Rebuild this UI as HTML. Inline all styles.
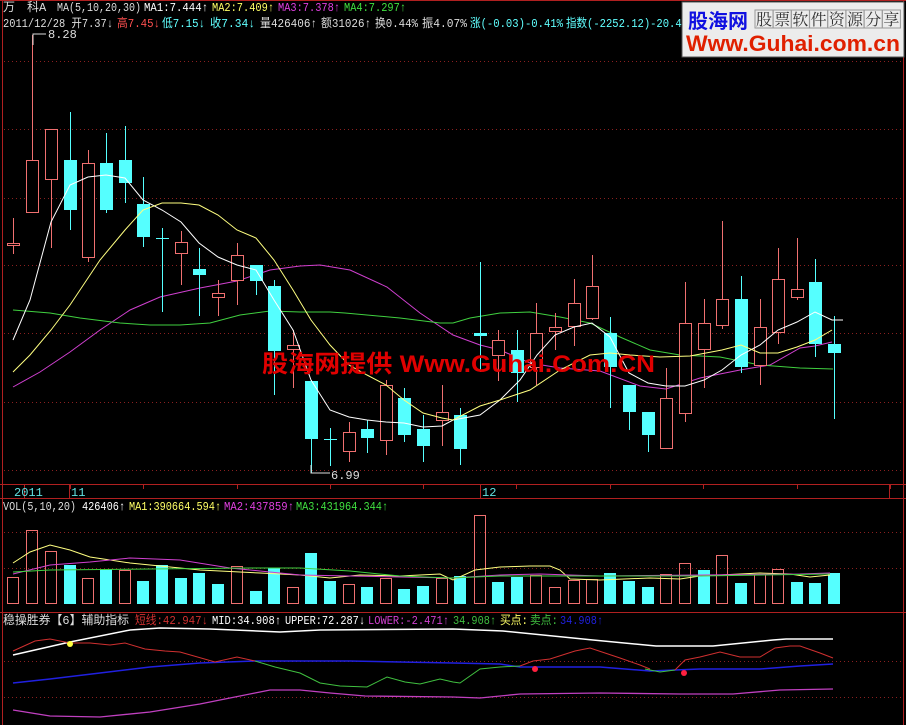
<!DOCTYPE html>
<html><head><meta charset="utf-8"><style>
html,body{margin:0;padding:0;background:#000;width:906px;height:725px;overflow:hidden}
svg{display:block}
text{font-family:"Liberation Mono","Noto Sans CJK SC",monospace;font-size:12px}
</style></head><body>
<svg id="s" width="906" height="725" xmlns="http://www.w3.org/2000/svg">
<rect width="906" height="725" fill="#000"/>
<g id="grid"></g>
<g id="g"></g>
<!-- borders -->
<g stroke="#b02020" stroke-width="1" fill="none">
<line x1="2.5" y1="0" x2="2.5" y2="725"/>
<line x1="903.5" y1="0" x2="903.5" y2="725"/>
<line x1="0" y1="0.5" x2="906" y2="0.5"/>
<line x1="0" y1="484.5" x2="906" y2="484.5"/>
<line x1="0" y1="498.5" x2="906" y2="498.5"/>
<line x1="0" y1="612.5" x2="906" y2="612.5"/>
</g>
<g id="ticks" stroke="#b02020"></g>
<!-- header -->
<text x="3" y="11" fill="#ddd">万</text>
<text x="27" y="11" fill="#ddd">科A</text>
<text x="57" y="11" fill="#ddd" textLength="84" lengthAdjust="spacingAndGlyphs">MA(5,10,20,30)</text>
<text x="144" y="11" fill="#fff" textLength="64" lengthAdjust="spacingAndGlyphs">MA1:7.444↑</text>
<text x="212" y="11" fill="#ffff66" textLength="62" lengthAdjust="spacingAndGlyphs">MA2:7.409↑</text>
<text x="278" y="11" fill="#e040e0" textLength="62" lengthAdjust="spacingAndGlyphs">MA3:7.378↑</text>
<text x="344" y="11" fill="#40e040" textLength="62" lengthAdjust="spacingAndGlyphs">MA4:7.297↑</text>
<text x="3" y="27" fill="#ddd" textLength="110" lengthAdjust="spacingAndGlyphs">2011/12/28 开7.37↓</text>
<text x="117" y="27" fill="#ff5050" textLength="43" lengthAdjust="spacingAndGlyphs">高7.45↓</text>
<text x="162" y="27" fill="#60ffff" textLength="43" lengthAdjust="spacingAndGlyphs">低7.15↓</text>
<text x="210" y="27" fill="#60ffff" textLength="45" lengthAdjust="spacingAndGlyphs">收7.34↓</text>
<text x="260" y="27" fill="#ddd" textLength="57" lengthAdjust="spacingAndGlyphs">量426406↑</text>
<text x="321" y="27" fill="#ddd" textLength="50" lengthAdjust="spacingAndGlyphs">额31026↑</text>
<text x="375" y="27" fill="#ddd" textLength="43" lengthAdjust="spacingAndGlyphs">换0.44%</text>
<text x="422" y="27" fill="#ddd" textLength="45" lengthAdjust="spacingAndGlyphs">振4.07%</text>
<text x="470" y="27" fill="#60ffff" textLength="93" lengthAdjust="spacingAndGlyphs">涨(-0.03)-0.41%</text>
<text x="566" y="27" fill="#60ffff" textLength="122" lengthAdjust="spacingAndGlyphs">指数(-2252.12)-20.49</text>
<!-- labels -->
<polyline points="33,45 33,34 46,34" stroke="#ddd" fill="none"/>
<text x="48" y="38" fill="#ddd" font-size="11">8.28</text>
<polyline points="311,465 311,473 330,473" stroke="#ddd" fill="none"/>
<text x="331" y="479" fill="#ddd" font-size="11">6.99</text>
<text x="14" y="496" fill="#60e0e0" font-size="11">2011</text>
<text x="71" y="496" fill="#60e0e0" font-size="11">11</text>
<text x="482" y="496" fill="#60e0e0" font-size="11">12</text>
<text x="3" y="510" fill="#ddd" textLength="73" lengthAdjust="spacingAndGlyphs">VOL(5,10,20)</text>
<text x="82" y="510" fill="#fff" textLength="43" lengthAdjust="spacingAndGlyphs">426406↑</text>
<text x="129" y="510" fill="#ffff66" textLength="92" lengthAdjust="spacingAndGlyphs">MA1:390664.594↑</text>
<text x="224" y="510" fill="#e040e0" textLength="70" lengthAdjust="spacingAndGlyphs">MA2:437859↑</text>
<text x="296" y="510" fill="#40e040" textLength="92" lengthAdjust="spacingAndGlyphs">MA3:431964.344↑</text>
<text x="3" y="624" fill="#ddd" textLength="126" lengthAdjust="spacingAndGlyphs">稳操胜券【6】辅助指标</text>
<text x="135" y="624" fill="#d03030" textLength="73" lengthAdjust="spacingAndGlyphs">短线:42.947↓</text>
<text x="212" y="624" fill="#fff" textLength="69" lengthAdjust="spacingAndGlyphs">MID:34.908↑</text>
<text x="285" y="624" fill="#fff" textLength="80" lengthAdjust="spacingAndGlyphs">UPPER:72.287↓</text>
<text x="368" y="624" fill="#d040d0" textLength="81" lengthAdjust="spacingAndGlyphs">LOWER:-2.471↑</text>
<text x="453" y="624" fill="#40c040" textLength="43" lengthAdjust="spacingAndGlyphs">34.908↑</text>
<text x="500" y="624" fill="#ffff66" textLength="28" lengthAdjust="spacingAndGlyphs">买点:</text>
<text x="530" y="624" fill="#40c040" textLength="28" lengthAdjust="spacingAndGlyphs">卖点:</text>
<text x="560" y="624" fill="#2020e0" textLength="43" lengthAdjust="spacingAndGlyphs">34.908↑</text>
<!-- watermark -->
<text x="262" y="372" fill="#e00000" font-family="Liberation Sans,'Noto Sans CJK SC',sans-serif" font-weight="bold" font-size="24" textLength="393" lengthAdjust="spacingAndGlyphs" style="font-family:'Liberation Sans','Noto Sans CJK SC',sans-serif;font-size:24px">股海网提供 Www.Guhai.Com.CN</text>
<!-- logo -->
<rect x="682" y="2" width="222" height="55" fill="#ececec" stroke="#555"/>
<text x="688" y="28" fill="#1010e0" font-weight="bold" textLength="60" lengthAdjust="spacingAndGlyphs" style="font-family:'Noto Sans CJK SC',sans-serif;font-size:20px">股海网</text>
<g id="boxes"></g>
<text x="686" y="51" fill="#e02000" font-weight="bold" textLength="214" lengthAdjust="spacingAndGlyphs" style="font-family:'Liberation Sans',sans-serif;font-size:22px">Www.Guhai.com.cn</text>
</svg>
<script>
var NS="http://www.w3.org/2000/svg",G=document.getElementById('g');
function el(p,t,a){var e=document.createElementNS(NS,t);for(var k in a)e.setAttribute(k,a[k]);p.appendChild(e);return e;}
var grid=document.getElementById('grid');
[61,129,198,265,333,402,470,532,568,661,697].forEach(function(y){el(grid,'line',{x1:4,x2:902,y1:y+.5,y2:y+.5,stroke:'#8a2020','stroke-dasharray':'1 3'});});
var tk=document.getElementById('ticks');
[70,143,237,330,423,480,516,610,703,797,890].forEach(function(x){el(tk,'line',{x1:x+.5,x2:x+.5,y1:484,y2:489});});
el(tk,'line',{x1:24.5,x2:24.5,y1:484,y2:499});el(tk,'line',{x1:69.5,x2:69.5,y1:484,y2:499});el(tk,'line',{x1:480.5,x2:480.5,y1:484,y2:499});el(tk,'line',{x1:889.5,x2:889.5,y1:484,y2:499});
var R='#f07070',C='#55ffff';
// [x, bodyTop, bodyBot, wickTop, wickBot, red?]
var c=[[13,243,246,218,254,1],[32,160,213,35,213,1],[51,129,180,129,248,1],[70,160,210,112,230,0],[88,163,258,150,262,1],[106,163,210,133,213,0],[125,160,183,126,203,0],[143,204,237,177,247,0],[162,238,239,228,312,0],[181,242,254,231,285,1],[199,269,275,248,316,0],[218,293,298,280,316,1],[237,255,281,243,305,1],[256,265,281,265,295,0],[274,286,351,280,395,0],[293,345,350,330,388,1],[311,381,439,380,473,0],[330,439,440,428,466,0],[349,432,452,422,462,1],[367,429,438,420,453,0],[386,385,441,380,455,1],[404,398,435,388,442,0],[423,429,446,415,462,0],[442,412,421,385,446,1],[460,415,449,408,465,0],[480,333,336,262,372,0],[498,340,356,330,381,1],[517,350,373,330,402,0],[536,333,368,303,385,1],[555,327,332,313,350,1],[574,303,327,279,346,1],[592,286,319,255,320,1],[610,333,367,317,408,0],[629,385,412,385,430,0],[648,412,435,412,452,0],[666,398,449,368,449,1],[685,323,414,282,422,1],[704,323,350,299,388,1],[722,299,326,221,329,1],[741,299,367,276,373,0],[760,327,366,299,385,1],[778,279,333,248,344,1],[797,289,298,238,300,1],[815,282,344,259,357,0],[834,344,353,316,419,0]];
var vt=[577,530,551,565,578,569,570,581,565,578,573,584,566,591,568,587,553,581,584,587,578,589,586,578,576,515,582,577,575,587,580,579,573,581,587,574,563,570,555,583,574,569,582,583,573];
var vr=[1,1,1,0,1,0,1,0,0,0,0,0,1,0,0,1,0,0,1,0,1,0,0,1,0,1,0,0,1,1,1,1,0,0,0,1,1,0,1,0,1,1,0,0,0];
function pl(pts,col,w){el(G,'polyline',{points:pts,fill:'none',stroke:col,'stroke-width':w||1});}
// volume bars
c.forEach(function(d,i){var x=d[0],t=vt[i];
 if(vr[i])el(G,'rect',{x:x-5.5,y:t+.5,width:11,height:604-t-1,fill:'none',stroke:R});
 else el(G,'rect',{x:x-6,y:t,width:12,height:604-t,fill:C});});
// vol MAs
pl("13,563 30,552 50,545 70,550 90,557 110,560 130,563 150,565 200,570 260,573 300,575 330,578 360,575 400,576 440,574 453,580 475,570 500,567 530,566 550,566 560,570 570,579 600,580 650,578 680,579 700,576 720,575 740,574 760,573 790,574 810,577 830,575",'#ffff80');
pl("13,574 50,565 90,562 130,558 180,560 230,568 270,572 300,575 453,578 500,575 540,574 600,576 700,575 800,574 830,573",'#d040d0');
pl("13,572 50,570 150,569 250,568 300,568 350,571 400,576 450,578 500,576 700,576 830,574",'#40d040');
// MA lines main
pl("13,387 40,372 70,352 100,330 130,310 160,297 200,288 237,281 270,270 300,266 320,265 350,270 387,287 420,313 453,335 480,345 500,350 530,363 560,368 600,371 640,386 666,389 700,378 740,370 770,365 800,348 815,346 832,342",'#d040d0');
pl("13,310 50,313 80,318 120,323 150,325 180,325 210,323 240,315 270,311 300,312 330,312 345,313 400,318 440,323 453,323 470,318 500,313 530,312 560,317 590,323 620,337 650,350 680,355 720,357 760,365 800,368 833,369",'#40d040');
// candles
c.forEach(function(d){var x=d[0],col=d[5]?R:C;
 el(G,'line',{x1:x+.5,x2:x+.5,y1:d[3],y2:d[4],stroke:col});
 var h=d[2]-d[1];
 if(d[5]){el(G,'rect',{x:x-5.5,y:d[1]+.5,width:12,height:Math.max(h-1,1),fill:'#000',stroke:col});}
 else if(h<2){el(G,'line',{x1:x-6,x2:x+7,y1:d[1]+.5,y2:d[1]+.5,stroke:col});}
 else el(G,'rect',{x:x-6,y:d[1],width:13,height:h,fill:col});});
pl("13,340 30,300 51,222 70,185 88,177 106,175 125,178 143,200 162,210 181,222 199,243 218,257 237,265 256,270 274,300 293,330 311,380 330,410 349,417 367,420 386,422 404,423 423,427 442,426 453,420 480,415 500,400 520,380 537,355 555,335 574,327 592,323 610,337 629,373 648,383 666,386 685,386 704,380 722,370 741,355 760,345 778,330 797,322 815,312 832,320 843,320",'#ffffff');
pl("13,372 30,355 51,330 70,305 100,260 125,230 143,210 162,203 181,203 199,205 218,215 237,230 256,238 274,260 293,290 311,320 330,345 349,365 367,375 386,385 404,400 423,413 442,418 453,420 480,406 500,400 530,390 560,370 590,355 610,353 630,355 660,357 690,356 722,350 741,345 760,353 778,353 797,347 815,340 832,330",'#ffff80');
// indicator
pl("13,710 50,716 100,717 150,712 200,704 255,693 270,690 300,690 330,693 365,696 453,697 480,698 520,694 600,693 680,694 733,694 780,690 833,689",'#c040c0',1.3);
pl("13,683 50,679 100,673 150,667 200,663 255,661 300,661 350,661 400,662 453,663 500,664 520,667 600,667 650,671 700,669 760,669 800,666 833,664",'#2020e0',1.5);
pl("13,655 70,642 130,630 160,628 210,629 280,632 300,631 320,630 453,629 503,631 593,640 656,646 713,646 773,640 786,639 833,639",'#ffffff',1.5);
pl("13,651 35,641 50,639 70,643 90,643 110,645 125,643 145,649 165,651 180,652 215,662 237,657 255,661",'#d03030');
pl("255,661 275,667 300,673 320,683 340,686 367,687 387,677 405,682 420,684 440,679 453,682 460,683 480,669 500,667 520,666",'#40c040');
pl("520,666 533,661 550,659 575,651 590,648 605,653 620,658 640,665 650,669",'#d03030');
pl("645,669 660,672 675,670",'#40c040');
pl("675,670 685,660 700,657 720,652 740,657 760,657 775,648 790,646 800,646 820,653 833,658",'#d03030');
el(G,'circle',{cx:70,cy:644,r:3,fill:'#ffff40'});
el(G,'circle',{cx:535,cy:669,r:3,fill:'#ff2040'});
el(G,'circle',{cx:684,cy:673,r:3,fill:'#ff2040'});
// logo boxes
var B=document.getElementById('boxes'),s='股票软件资源分享';
for(var i=0;i<8;i++){el(B,'rect',{x:755+i*18.2,y:10,width:18,height:18,fill:'none',stroke:'#999'});
 var t=el(B,'text',{x:756+i*18.2,y:25,fill:'#333',style:"font-family:'Noto Serif CJK SC',serif;font-size:16px"});t.textContent=s[i];}
</script>
</body></html>
